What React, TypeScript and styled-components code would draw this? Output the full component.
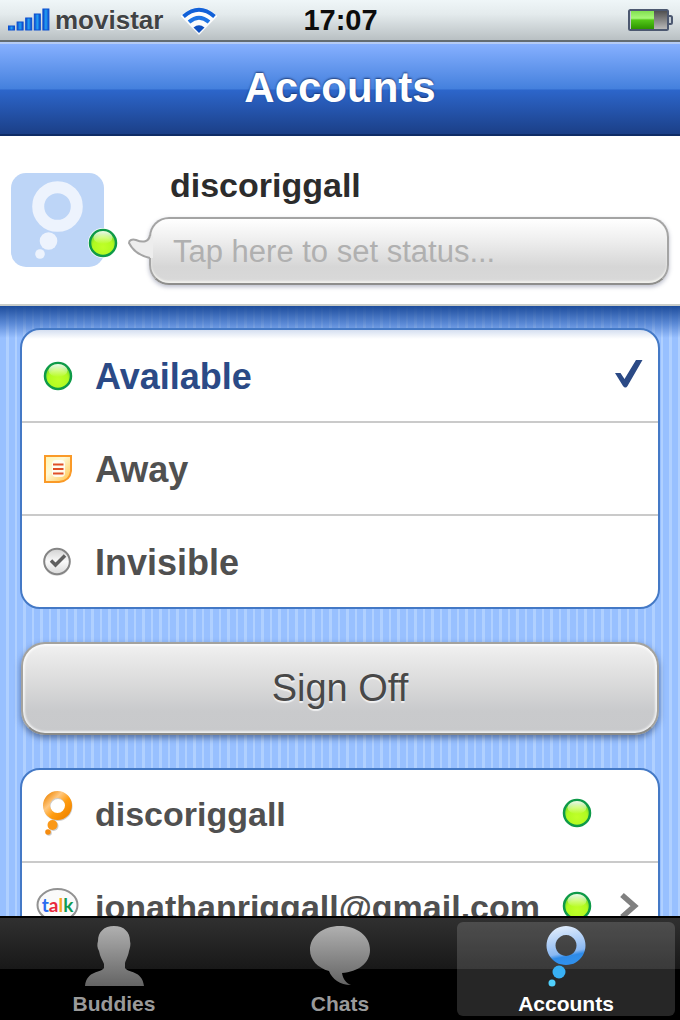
import React from "react";
import styled, { createGlobalStyle } from "styled-components";

const GlobalStyle = createGlobalStyle`
  *, *::before, *::after { box-sizing: border-box; }
  body { margin: 0; background: #000; }
  body, button, input { font-family: "Liberation Sans", Arial, Helvetica, sans-serif; }
  button { margin: 0; padding: 0; border: 0; background: none; cursor: pointer; }
  svg { display: block; }
`;

const Screen = styled.div`
  display: flex;
  flex-direction: column;
  height: 100vh;
  overflow: hidden;
  background: #fff;
`;

const StatusBar = styled.header`
  flex: none;
  display: grid;
  grid-template-columns: 1fr auto 1fr;
  align-items: center;
  height: 42px;
  padding: 0 7px 0 8px;
  background: linear-gradient(#eff6f8 0%, #e4ebed 35%, #b9c0c3 100%);
  border-bottom: 2px solid #636c72;
`;

const Carrier = styled.div`
  display: flex;
  align-items: center;
  gap: 5px;
  color: #404244;
  font-size: 26px;
  line-height: 30px;
  font-weight: bold;
  text-shadow: 0 1px 1px #fff;

  svg:last-child { margin-left: 13px; }
`;

const Clock = styled.time`
  color: #0c0c0c;
  font-size: 29px;
  line-height: 30px;
  font-weight: bold;
`;

const Power = styled.div`
  display: flex;
  justify-content: flex-end;
`;

const TitleBar = styled.div`
  flex: none;
  display: flex;
  align-items: center;
  justify-content: center;
  height: 94px;
  padding-bottom: 2px;
  background: linear-gradient(#86b0ff 0%, #4480dd 50%, #2d66cb 51%, #1b3f87 100%);
  border-top: 2px solid #b4cbf5;
  border-bottom: 2px solid #0f2c66;
`;

const Title = styled.h1`
  margin: 0;
  color: #fff;
  font-size: 42px;
  line-height: 48px;
  font-weight: bold;
  text-shadow: 0 -1px 2px rgba(20, 40, 90, 0.8);
`;

const Profile = styled.section`
  flex: none;
  display: flex;
  align-items: center;
  gap: 24px;
  height: 170px;
  padding: 0 11px;
  background: #fff;
  border-bottom: 2px solid #c9cdc9;
`;

const Avatar = styled.div`
  flex: none;
  position: relative;
  width: 93px;
  height: 94px;
  border-radius: 15px;
  background: #bdd5f7;
`;

const Presence = styled.span`
  position: absolute;
  right: -14px;
  bottom: 9px;
  border-radius: 50%;
  background: #fff;
`;

const ProfileText = styled.div`
  flex: 1;
  min-width: 0;
  padding: 12px 0 0 21px;
`;

const ProfileName = styled.h2`
  margin: 0 0 14px;
  padding-left: 21px;
  color: #2c2c2c;
  font-size: 34px;
  line-height: 36px;
  font-weight: bold;
`;

const Bubble = styled.label`
  display: block;
  position: relative;
  height: 68px;
`;

const BubbleTail = styled.svg`
  position: absolute;
  left: -21px;
  top: 18px;
  overflow: visible;
`;

const StatusInput = styled.input`
  display: block;
  width: 100%;
  height: 68px;
  padding: 2px 22px 0;
  border: 2px solid #a4a4a4;
  border-bottom-color: #8e8e8c;
  border-radius: 20px;
  background: linear-gradient(#fff 0%, #f0f0f0 30%, #d6d6d6 75%, #d9d9d9 100%);
  box-shadow: 0 2px 4px rgba(60, 70, 110, 0.35), inset 0 -2px 2px #f2f2ee;
  color: #555;
  font-size: 31px;
  outline: none;

  &::placeholder { color: #b0b0b0; opacity: 1; }
`;

const Content = styled.main`
  flex: 1;
  min-height: 0;
  position: relative;
  display: flex;
  flex-direction: column;
  gap: 33px;
  padding: 22px 20px 0;
  overflow: hidden;
  background: repeating-linear-gradient(
    90deg,
    #98c0ff 0 6px,
    #b0d0ff 6px 9px,
    #98c0ff 9px 15px,
    #b0d0ff 15px 17px
  );

  &::before {
    content: "";
    position: absolute;
    z-index: 1;
    inset: 0 0 auto;
    height: 32px;
    pointer-events: none;
    background: linear-gradient(rgba(22, 70, 150, 0.95), rgba(40, 92, 180, 0.55) 55%, rgba(40, 92, 180, 0));
  }
`;

const Card = styled.ul`
  flex: none;
  position: relative;
  margin: 0;
  padding: 0;
  list-style: none;
  overflow: hidden;
  border: 2px solid #4479c6;
  border-radius: 20px;
  background: #fff;
`;

const RaisedCard = styled(Card)`
  z-index: 2;
  background: linear-gradient(#d5dff0, #fff 9px);
`;

const Item = styled.li`
  & + & { border-top: 2px solid #cacaca; }
`;

const Row = styled.button<{ $selected?: boolean }>`
  display: flex;
  align-items: center;
  width: 100%;
  height: 91px;
  padding: 0 14px;
  text-align: left;
  color: ${(p) => (p.$selected ? "#2b4a86" : "#505050")};
`;

const AccountRow = styled(Row)`
  padding-bottom: 6px;
`;

const RowIcon = styled.span`
  flex: none;
  display: flex;
  justify-content: center;
  width: 44px;
`;

const RowLabel = styled.span<{ $size: number }>`
  flex: 1;
  min-width: 0;
  padding: 3px 0 0 15px;
  font-size: ${(p) => p.$size}px;
  line-height: 40px;
  font-weight: bold;
  white-space: nowrap;
`;

const Trailing = styled.span`
  flex: none;
  display: flex;
  justify-content: center;
  width: 30px;
  margin-left: 22px;
`;

const SignOff = styled.button`
  flex: none;
  height: 93px;
  margin: 0 1px;
  padding-bottom: 2px;
  border: 2px solid #a3a29e;
  border-bottom-color: #8b8b88;
  border-radius: 24px;
  background: linear-gradient(#f1f1f1 0%, #dfdfdf 35%, #c9cacc 75%, #c8c9cb 100%);
  box-shadow: 0 3px 6px rgba(40, 60, 100, 0.6), inset 0 0 2px 2px rgba(255, 255, 255, 0.7);
  color: #484848;
  font-size: 38px;
  line-height: 44px;
  text-shadow: 0 2px 1px rgba(255, 255, 255, 0.7);
`;

const TabBar = styled.nav`
  flex: none;
  display: flex;
  gap: 8px;
  height: 104px;
  padding: 4px 5px;
  border-top: 2px solid #000;
  background: linear-gradient(#303030 0, #181818 51px, #000 51px);
`;

const Tab = styled.button<{ $active?: boolean }>`
  flex: 1;
  display: flex;
  flex-direction: column;
  align-items: center;
  justify-content: space-between;
  padding: 3px 0 0;
  border-radius: 6px;
  background: ${(p) => (p.$active ? "rgba(255, 255, 255, 0.15)" : "none")};
  color: ${(p) => (p.$active ? "#fff" : "#9a9a9a")};
  font-size: 21px;
  line-height: 24px;
  font-weight: bold;
`;

const SignalIcon = () => (
  <svg width="42" height="24" viewBox="0 0 42 24" aria-hidden="true">
    <defs>
      <linearGradient id="signal" x1="0" x2="1" y1="0" y2="0">
        <stop offset="0" stopColor="#0a45c8" />
        <stop offset=".5" stopColor="#22a0f4" />
        <stop offset="1" stopColor="#0a45c8" />
      </linearGradient>
    </defs>
    {[4, 8, 12, 16, 21].map((h, i) => (
      <rect key={h} x={i * 8.6 + 0.5} y={22 - h} width="6" height={h} fill="url(#signal)" stroke="#0b4fd0" />
    ))}
  </svg>
);

const WifiIcon = () => (
  <svg width="36" height="30" viewBox="0 -2 36 30" aria-hidden="true">
    <path d="M18 28 L-0.500 9 Q18 -8 36.500 9 Z" fill="#fff" opacity=".9" />
    <g fill="none" stroke="#1261d8" strokeWidth="4">
      <path d="M2.500 9.500 Q18 -4 33.500 9.500" />
      <path d="M8 15 Q18 6.500 28 15" stroke="#1e74e4" />
    </g>
    <path d="M12.500 20.500 Q18 16 23.500 20.500 L18 26 Z" fill="#0e50c0" />
  </svg>
);

const BatteryIcon = () => (
  <svg width="45" height="22" viewBox="0 0 45 22" role="img" aria-label="Battery">
    <defs>
      <linearGradient id="charge" x1="0" x2="0" y1="0" y2="1">
        <stop offset="0" stopColor="#82e050" />
        <stop offset=".4" stopColor="#a8f878" />
        <stop offset=".5" stopColor="#54c818" />
        <stop offset="1" stopColor="#2c9400" />
      </linearGradient>
      <linearGradient id="drained" x1="0" x2="0" y1="0" y2="1">
        <stop offset="0" stopColor="#505050" />
        <stop offset="1" stopColor="#b8b8b8" />
      </linearGradient>
    </defs>
    <rect x="39" y="7" width="5" height="8" rx="1.500" fill="#c4ccd4" stroke="#4c5870" strokeWidth="2" />
    <rect x="1" y="1" width="39" height="20" rx="1.500" fill="#c4c8d8" stroke="#4c5870" strokeWidth="2" />
    <rect x="3" y="2" width="23" height="18" fill="url(#charge)" />
    <rect x="26" y="2" width="13" height="18" fill="url(#drained)" />
  </svg>
);

const OnlineDot = () => (
  <svg width="30" height="30" viewBox="0 0 30 30" role="img" aria-label="Online">
    <defs>
      <radialGradient id="online" cx=".5" cy=".65" r=".55">
        <stop offset="0" stopColor="#c0ff28" />
        <stop offset=".7" stopColor="#b0fa20" />
        <stop offset="1" stopColor="#78dc30" />
      </radialGradient>
      <linearGradient id="onlineShine" x1="0" x2="0" y1="0" y2="1">
        <stop offset="0" stopColor="#fff" stopOpacity=".9" />
        <stop offset="1" stopColor="#fff" stopOpacity="0" />
      </linearGradient>
    </defs>
    <circle cx="15" cy="15" r="13" fill="url(#online)" stroke="#0e9a48" strokeWidth="2.500" />
    <ellipse cx="15" cy="9.500" rx="9.500" ry="6.500" fill="url(#onlineShine)" />
  </svg>
);

const NoteIcon = () => (
  <svg width="30" height="30" viewBox="0 0 30 30" aria-hidden="true">
    <defs>
      <linearGradient id="note" x1="0" x2="1" y1="0" y2="1">
        <stop offset="0" stopColor="#fff4b0" />
        <stop offset=".4" stopColor="#fff8d4" />
        <stop offset="1" stopColor="#ffc040" />
      </linearGradient>
    </defs>
    <path d="M2 2 H28 V17 Q27 27 16 28 H2 Z" fill="url(#note)" stroke="#fa9a28" strokeWidth="2" />
    <rect x="9" y="6" width="13" height="17" rx="4" fill="#fff" opacity=".8" />
    <path d="M10 10.500 H20.500 M10 15 H20.500 M10 19.500 H20.500" stroke="#e05028" strokeWidth="2.200" />
  </svg>
);

const InvisibleIcon = () => (
  <svg width="30" height="30" viewBox="0 0 30 30" aria-hidden="true">
    <defs>
      <linearGradient id="hidden" x1="0" x2="0" y1="0" y2="1">
        <stop offset="0" stopColor="#d0d0d0" />
        <stop offset=".5" stopColor="#fafafa" />
        <stop offset="1" stopColor="#d8d8d8" />
      </linearGradient>
    </defs>
    <circle cx="14" cy="16" r="13" fill="#ccc" opacity=".5" />
    <circle cx="14" cy="14.500" r="12.800" fill="url(#hidden)" stroke="#858585" strokeWidth="2" />
    <path d="M8 13.500 L12.500 18 L22 8.500" fill="none" stroke="#606060" strokeWidth="3.500" />
  </svg>
);

const CheckIcon = () => (
  <svg width="30" height="34" viewBox="0 0 30 34" role="img" aria-label="Selected">
    <path d="M1 14 H6.500 L10.500 20 L22 1 H28.500 L13.500 27 Q11.500 30 9 27 Z" fill="#2b4a86" />
  </svg>
);

const ChevronIcon = () => (
  <svg width="20" height="30" viewBox="0 0 20 30" aria-hidden="true">
    <path d="M3 4 L15.500 15 L3 26" fill="none" stroke="#808080" strokeWidth="5.500" />
  </svg>
);

const AvatarMark = () => (
  <svg width="93" height="94" viewBox="0 0 93 94" aria-hidden="true">
    <circle cx="46.500" cy="33.500" r="19.300" fill="none" stroke="#edf3fd" strokeWidth="12" />
    <circle cx="37.500" cy="68" r="8.800" fill="#edf3fd" />
    <circle cx="29" cy="81" r="4.800" fill="#edf3fd" />
  </svg>
);

const OrangeMark = () => (
  <svg width="32" height="46" viewBox="0 0 32 46" aria-hidden="true">
    <defs>
      <linearGradient id="orange" x1="0" x2="1" y1="0" y2="1">
        <stop offset="0" stopColor="#f08c10" />
        <stop offset=".3" stopColor="#ffc880" />
        <stop offset=".6" stopColor="#ff9c10" />
        <stop offset="1" stopColor="#f08400" />
      </linearGradient>
    </defs>
    <g fill="#999" opacity=".5">
      <circle cx="11.500" cy="36" r="5" />
      <circle cx="7" cy="43" r="2.800" />
    </g>
    <circle cx="16" cy="16.500" r="11" fill="none" stroke="#999" strokeOpacity=".5" strokeWidth="7" />
    <circle cx="15.500" cy="15.500" r="11" fill="none" stroke="url(#orange)" strokeWidth="7" />
    <circle cx="10.500" cy="35" r="5" fill="#fa9818" />
    <circle cx="6" cy="42" r="2.800" fill="#f58c10" />
  </svg>
);

const TalkIcon = () => (
  <svg width="44" height="36" viewBox="0 0 44 36" role="img" aria-label="talk">
    <ellipse cx="21.500" cy="17" rx="20" ry="16" fill="#fafafa" stroke="#929292" strokeWidth="2" />
    <text x="21.500" y="24" textAnchor="middle" fontFamily="Lato, sans-serif" fontSize="19" fontWeight="bold">
      <tspan fill="#2a6cf0">t</tspan>
      <tspan fill="#e8283c">a</tspan>
      <tspan fill="#f8a820">l</tspan>
      <tspan fill="#109a50">k</tspan>
    </text>
  </svg>
);

const TabShade = ({ id }: { id: string }) => (
  <defs>
    <linearGradient id={id} x1="0" x2="0" y1="0" y2="1">
      <stop offset="0" stopColor="#b0b0b0" />
      <stop offset="1" stopColor="#646464" />
    </linearGradient>
  </defs>
);

const BuddyIcon = () => (
  <svg width="60" height="62" viewBox="0 0 60 62" aria-hidden="true">
    <TabShade id="buddy" />
    <path
      d="M30 1 C40 1 46 7 46 16 C47 19 46 23 45 26 C44 32 41 36 41 39 V43 C44 48 58 45 60 61 H1 C3 45 17 48 20 43 V39 C19 36 16 32 15 26 C13 23 13 19 14 16 C14 7 20 1 30 1 Z"
      fill="url(#buddy)"
    />
  </svg>
);

const ChatIcon = () => (
  <svg width="60" height="62" viewBox="0 0 60 62" aria-hidden="true">
    <TabShade id="chat" />
    <path
      d="M30 1 C47 1 60 11 60 25 C60 38 48 47 32 48 C33 54 36 58 41 60 C30 60 22 54 19 46 C8 43 0 35 0 25 C0 11 13 1 30 1 Z"
      fill="url(#chat)"
    />
  </svg>
);

const AccountsIcon = () => (
  <svg width="40" height="62" viewBox="0 0 40 62" aria-hidden="true">
    <defs>
      <linearGradient id="ring" x1="0" x2=".2" y1="0" y2="1">
        <stop offset="0" stopColor="#eaf2fd" />
        <stop offset=".75" stopColor="#8ab8f2" />
        <stop offset=".85" stopColor="#2f8be8" />
        <stop offset="1" stopColor="#3090ec" />
      </linearGradient>
    </defs>
    <path
      fillRule="evenodd"
      d="M20 1 A19.500 19.500 0 1 1 19.990 1 Z M20 10 A10.500 10.500 0 1 0 20.010 10 Z"
      fill="url(#ring)"
    />
    <circle cx="13" cy="47" r="6.500" fill="#38b0f4" />
    <circle cx="6" cy="58" r="3.500" fill="#50d0fc" />
  </svg>
);

export default function App() {
  return (
    <>
      <GlobalStyle />
      <Screen>
        <StatusBar>
          <Carrier>
            <SignalIcon />
            <span>movistar</span>
            <WifiIcon />
          </Carrier>
          <Clock>17:07</Clock>
          <Power>
            <BatteryIcon />
          </Power>
        </StatusBar>
        <TitleBar>
          <Title>Accounts</Title>
        </TitleBar>
        <Profile>
          <Avatar>
            <AvatarMark />
            <Presence>
              <OnlineDot />
            </Presence>
          </Avatar>
          <ProfileText>
            <ProfileName>discoriggall</ProfileName>
            <Bubble>
              <StatusInput type="text" aria-label="Status" placeholder="Tap here to set status..." />
              <BubbleTail width="26" height="28" viewBox="0 0 26 28" aria-hidden="true">
                <path d="M25 1 H22 C21 6 15 8 8 5 C4 4 1 5 1 8 C5 16 13 21 22 23 H25 Z" fill="#ededed" />
                <path d="M22 0 C21 7 15 8 8 5 C4 4 1 5 1 8 C5 16 13 21 22 23" fill="none" stroke="#a4a4a4" strokeWidth="2" />
              </BubbleTail>
            </Bubble>
          </ProfileText>
        </Profile>
        <Content>
          <RaisedCard>
            <Item>
              <Row $selected>
                <RowIcon><OnlineDot /></RowIcon>
                <RowLabel $size={36}>Available</RowLabel>
                <Trailing><CheckIcon /></Trailing>
              </Row>
            </Item>
            <Item>
              <Row>
                <RowIcon><NoteIcon /></RowIcon>
                <RowLabel $size={36}>Away</RowLabel>
              </Row>
            </Item>
            <Item>
              <Row>
                <RowIcon><InvisibleIcon /></RowIcon>
                <RowLabel $size={36}>Invisible</RowLabel>
              </Row>
            </Item>
          </RaisedCard>
          <SignOff>Sign Off</SignOff>
          <Card>
            <Item>
              <AccountRow>
                <RowIcon><OrangeMark /></RowIcon>
                <RowLabel $size={34}>discoriggall</RowLabel>
                <OnlineDot />
                <Trailing />
              </AccountRow>
            </Item>
            <Item>
              <AccountRow>
                <RowIcon><TalkIcon /></RowIcon>
                <RowLabel $size={34}>jonathanriggall@gmail.com</RowLabel>
                <OnlineDot />
                <Trailing><ChevronIcon /></Trailing>
              </AccountRow>
            </Item>
          </Card>
        </Content>
        <TabBar>
          <Tab><BuddyIcon />Buddies</Tab>
          <Tab><ChatIcon />Chats</Tab>
          <Tab $active><AccountsIcon />Accounts</Tab>
        </TabBar>
      </Screen>
    </>
  );
}
